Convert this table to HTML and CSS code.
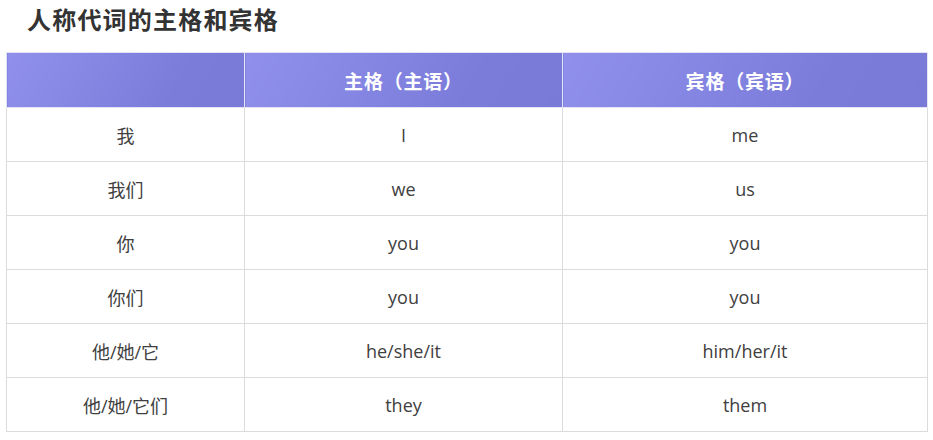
FILE: index.html
```html
<!DOCTYPE html>
<html lang="zh">
<head>
<meta charset="utf-8">
<link rel="stylesheet" href="styles.css">
</head>
<body>
<div class="page">
  <h2 class="title">人称代词的主格和宾格</h2>
  <table class="grid">
    <colgroup>
      <col class="c1"><col class="c2"><col class="c3">
    </colgroup>
    <thead>
      <tr><th></th><th>主格（主语）</th><th>宾格（宾语）</th></tr>
    </thead>
    <tbody>
      <tr><td>我</td><td>I</td><td>me</td></tr>
      <tr><td>我们</td><td>we</td><td>us</td></tr>
      <tr><td>你</td><td>you</td><td>you</td></tr>
      <tr><td>你们</td><td>you</td><td>you</td></tr>
      <tr><td>他/她/它</td><td>he/she/it</td><td>him/her/it</td></tr>
      <tr><td>他/她/它们</td><td>they</td><td>them</td></tr>
    </tbody>
  </table>
</div>
</body>
</html>
```

FILE: styles.css
```css
html, body {
  margin: 0;
  padding: 0;
  background: #fff;
}
.page {
  padding: 0 6px;
  font-family: "Open Sans", "Noto Sans CJK SC", sans-serif;
  color: #333;
}
.title {
  margin: 0;
  padding: 4px 0 0 21px;
  height: 52px;
  box-sizing: border-box;
  font-size: 24px;
  font-weight: 700;
  letter-spacing: 1.2px;
  line-height: 30px;
  color: #333;
  font-family: "Noto Sans CJK SC", sans-serif;
}
.grid {
  border-collapse: collapse;
  width: 921px;
  table-layout: fixed;
}
.c1 { width: 238px; }
.c2 { width: 318px; }
.c3 { width: 365px; }
.grid th {
  height: 55px;
  padding: 0;
  box-sizing: border-box;
  background: linear-gradient(120deg, #9090ec 0%, #7b7bda 70%, #7979d8 100%);
  color: #fff;
  font-family: "Noto Sans CJK SC", sans-serif;
  font-size: 19px;
  font-weight: 700;
  letter-spacing: 0.8px;
  border: 1px solid #e4e4f4;
  text-align: center;
}
.grid td {
  height: 54px;
  padding: 0;
  box-sizing: border-box;
  border: 1px solid #dcdcdc;
  text-align: center;
  font-size: 18px;
  color: #404040;
}
```
